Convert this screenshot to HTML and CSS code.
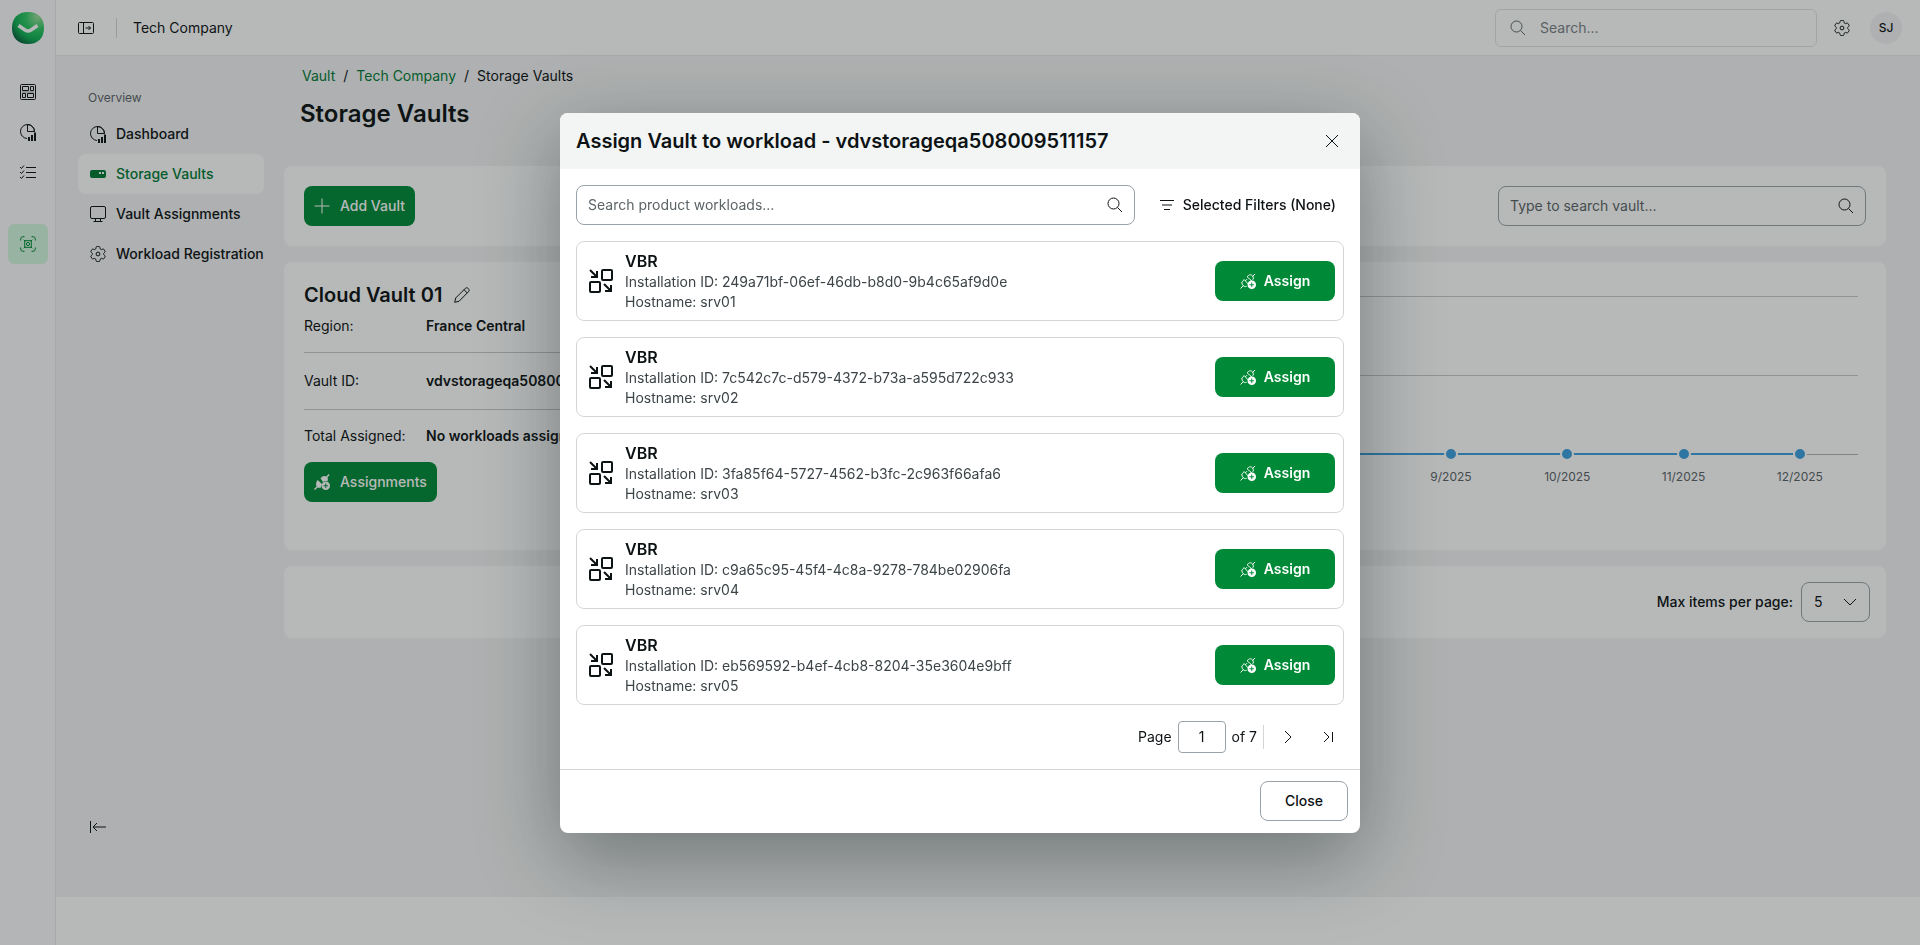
FILE: index.html
```html
<!DOCTYPE html>
<html lang="en">
<head>
  <meta charset="UTF-8">
  <meta name="viewport" content="width=device-width, initial-scale=1.0">
  <title>Storage Vaults</title>
  <link rel="stylesheet" href="styles.css">
</head>
<body>

  <!-- Shared icons -->
  <svg class="sprite" aria-hidden="true">
    <symbol id="i-search" viewBox="0 0 16 16"><circle cx="6.5" cy="6.5" r="5.500"/><path d="M10.500 10.500L15 15"/></symbol>
    <symbol id="i-gear" viewBox="0 0 16 16"><path d="M6 1Q6.200 0 7 0h2q.8 0 1 1l.4 1.700 1.100.7 1.700-.5q.9-.2 1.300.5l.9 1.600q.4.800-.3 1.400L13.900 7.500v1l1.200 1.100q.7.600.3 1.400l-.9 1.600q-.4.700-1.300.5l-1.700-.5-1.100.7L10 15q-.2 1-1 1H7q-.8 0-1-1l-.4-1.700-1.100-.7-1.700.5q-.9.200-1.300-.5L.6 11q-.4-.8.3-1.400L2.100 8.500v-1L.9 6.400Q.2 5.800.6 5l.9-1.600q.4-.7 1.300-.5l1.700.5 1.100-.7z" transform="translate(.4 .4) scale(.95)"/><circle cx="8" cy="8" r="1.900"/></symbol>
    <symbol id="i-pie" viewBox="0 0 16 17"><path d="M14.500 7.500A7 7 0 1 0 7 14.500M7.500 .5v7h7A7 7 0 0 0 7.500 .5z"/><path class="fill" d="M8 13h2v4H8zM11 11h2v6h-2zM14 8.500h2V17h-2z"/></symbol>
    <symbol id="i-plug" viewBox="0 0 17 17"><path d="M.5 16.500L3.500 13.500M13.200 3.800L16 1M3.500 13.500C1.500 11.500 1.600 9.500 3.300 8L4.500 7M4.500 7L8.500 11.500M7.500 4l5.500 5M7.500 4L9 2.700c1.300-1.200 3-1 4.200.3 1.300 1.300 1.300 3 .3 4.300M5.500 8.500L7.500 6.500M3.500 13.500c1 .9 2.200 1.200 3.500.7"/><circle class="fill" cx="12.500" cy="12.500" r="4.500"/><path class="cut" d="M12.500 10v5M10 12.500h5"/></symbol>
    <symbol id="i-plug-solid" viewBox="0 0 17 17"><path d="M.5 16.500L4 13M13 4L16 .5" stroke-width="1.500"/><path class="fill" d="M4 6.500L8.500 11 7 14.500H4.500C1.500 13 1.500 9.500 4 6.500zM7 4.500C8 2.500 11 1 13.500 3c1.500 1.500 1.500 3 .8 4.600L12 7.400l-2.500 1z"/><circle class="fill" cx="12.500" cy="12.500" r="4.500"/><path class="cut" d="M12.500 10v5M10 12.500h5"/></symbol>
    <symbol id="i-workload" viewBox="0 0 24 24"><rect x="13" y="1" width="10" height="10" rx="1"/><rect x="1" y="13" width="10" height="10" rx="1"/><path d="M1 1l7 7M8 2v6H2M15 15l7 7M22 16v6h-6"/></symbol>
  </svg>

  <div class="app">
    <aside class="rail">
      <svg class="logo" viewBox="0 0 32 32" role="img" aria-label="Home">
        <defs><radialGradient id="lg" cx="80%" cy="15%" r="95%"><stop offset="0" stop-color="#a0dca0"/><stop offset=".4" stop-color="#2fc864"/><stop offset=".75" stop-color="#0fae54"/><stop offset="1" stop-color="#0b6540"/></radialGradient></defs>
        <path d="M16 0C26 0 32 6 32 16S26 32 16 32 0 26 0 16 6 0 16 0z" fill="url(#lg)"/>
        <path d="M6.500 13.500l6.500 4.500q3 1.800 6 0l6.500-4.500" fill="none" stroke="#fff" stroke-width="3.500"/>
      </svg>
      <nav class="rail-nav">
        <a href="#" aria-label="Overview"><svg class="icon" viewBox="0 0 16 16"><rect x=".5" y=".5" width="15" height="15" rx="1"/><path d="M2.500 2.500h6v4h-6zM10.500 2.500h3v4h-3zM2.500 9.500h3v4h-3zM7.500 9.500h6v4h-6z"/><path d="M2 8h12" stroke-opacity=".4"/></svg></a>
        <a href="#" aria-label="Reports"><svg class="icon icon-tall"><use href="#i-pie"/></svg></a>
        <a href="#" aria-label="Tasks"><svg class="icon" viewBox="0 0 16 16"><path d="M6 3.500h10M6 8.500h10M6 13.500h10M0 3l1.500 1.500L4 1.500M0 8l1.500 1.500L4 6.500M0 13l1.500 1.500L4 11.500"/></svg></a>
      </nav>
      <a class="rail-active" href="#" aria-label="Vault"><svg class="icon" viewBox="0 0 16 16"><path d="M.7 4.500V3A2.300 2.300 0 0 1 3 .7h1.500M11.500 .7H13A2.300 2.300 0 0 1 15.300 3v1.500M15.300 11.500V13a2.300 2.300 0 0 1-2.300 2.300h-1.500M4.500 15.300H3A2.300 2.300 0 0 1 .7 13v-1.500"/><path d="M4.700 4.700h6.600v6.600H4.700zM3.700 3.700l1.500 1.500M12.300 3.700l-1.500 1.500M3.700 12.300l1.500-1.500M12.300 12.300l-1.500-1.500"/><circle cx="8" cy="8" r="1.600"/></svg></a>
    </aside>

    <div class="page">
      <header class="topbar">
        <button class="icon-btn" aria-label="Expand menu"><svg class="icon" viewBox="0 0 16 16"><rect x=".5" y="2.500" width="15" height="11" rx="1"/><path d="M5.500 2.500v11M7.500 8h5M10.500 6l2 2-2 2"/></svg></button>
        <span class="divider"></span>
        <span class="tenant">Tech Company</span>
        <label class="top-search">
          <svg class="icon"><use href="#i-search"/></svg>
          <input type="text" placeholder="Search..." aria-label="Search">
        </label>
        <button class="icon-btn" aria-label="Settings"><svg class="icon"><use href="#i-gear"/></svg></button>
        <button class="avatar">SJ</button>
      </header>

      <div class="workspace">
        <nav class="subnav">
          <h2>Overview</h2>
          <a href="#"><svg class="icon icon-tall"><use href="#i-pie"/></svg>Dashboard</a>
          <a href="#" class="active"><svg class="icon" viewBox="0 0 16 16"><rect class="fill" x="0" y="4" width="16" height="8" rx="2"/><path class="dots" d="M9 6h2v2H9zM12 6h2v2h-2z"/></svg>Storage Vaults</a>
          <a href="#"><svg class="icon" viewBox="0 0 16 16"><rect x=".5" y=".5" width="15" height="12" rx="1.500"/><path d="M5.500 12.500v3M10.500 12.500v3M3.500 15.500h9"/></svg>Vault Assignments</a>
          <a href="#"><svg class="icon"><use href="#i-gear"/></svg>Workload Registration</a>
          <button class="icon-btn collapse" aria-label="Collapse menu"><svg class="icon" viewBox="0 0 16 16"><path d="M.5 2v12M3 8h13M7 4L3 8l4 4"/></svg></button>
        </nav>

        <main>
          <nav class="crumbs">
            <a href="#">Vault</a><span>/</span><a href="#">Tech Company</a><span>/</span>Storage Vaults
          </nav>
          <h1>Storage Vaults</h1>

          <section class="card toolbar">
            <button class="btn primary"><svg class="icon" viewBox="0 0 16 16"><path d="M8 .5v15M.5 8h15"/></svg>Add Vault</button>
            <label class="field vault-search">
              <input type="text" placeholder="Type to search vault..." aria-label="Search vault">
              <svg class="icon"><use href="#i-search"/></svg>
            </label>
          </section>

          <section class="card vault">
            <div class="vault-info">
              <h3>Cloud Vault 01 <button class="icon-btn" aria-label="Rename"><svg class="icon" viewBox="0 0 16 16"><path d="M.7 15.300l1-4.300L11.500 1.200c1.600-1.600 4.800 1.500 3.200 3.300L5 14.300zM10 2.700L13.300 6" stroke-linejoin="round"/></svg></button></h3>
              <dl>
                <div><dt>Region:</dt><dd>France Central</dd></div>
                <div><dt>Vault ID:</dt><dd>vdvstorageqa508009511157</dd></div>
                <div><dt>Total Assigned:</dt><dd>No workloads assigned</dd></div>
              </dl>
              <button class="btn primary"><svg class="icon"><use href="#i-plug-solid"/></svg>Assignments</button>
            </div>
            <div class="chart">
              <div class="plot"><span class="series"></span></div>
              <ul class="months" id="months"></ul>
            </div>
          </section>

          <section class="card paging">
            <label for="perPage">Max items per page:</label>
            <div class="select">
              <select id="perPage"><option>5</option><option>10</option><option>25</option></select>
              <svg class="icon" viewBox="0 0 16 16"><path d="M2 5l6 6 6-6"/></svg>
            </div>
          </section>
        </main>
      </div>
    </div>
  </div>

  <div class="overlay">
    <div class="modal" role="dialog" aria-modal="true" aria-labelledby="modalTitle">
      <div class="modal-head">
        <h2 id="modalTitle">Assign Vault to workload - vdvstorageqa508009511157</h2>
        <button class="icon-btn" aria-label="Close dialog"><svg class="icon" viewBox="0 0 16 16"><path d="M2 2l12 12M14 2L2 14"/></svg></button>
      </div>
      <div class="modal-body">
        <div class="filters">
          <label class="field">
            <input type="text" placeholder="Search product workloads..." aria-label="Search product workloads">
            <svg class="icon"><use href="#i-search"/></svg>
          </label>
          <button class="filter-btn"><svg class="icon" viewBox="0 0 16 16"><path d="M1 3.500h14M3 8h10M5 12.500h6"/></svg>Selected Filters (None)</button>
        </div>
        <ul class="workloads" id="workloads"></ul>
        <div class="pager">
          <label for="pageNo">Page</label>
          <input type="text" id="pageNo" value="1">
          <span>of 7</span>
          <span class="divider"></span>
          <button class="icon-btn" aria-label="Next page"><svg class="icon" viewBox="0 0 16 16"><path d="M5 2l6 6-6 6"/></svg></button>
          <button class="icon-btn" aria-label="Last page"><svg class="icon" viewBox="0 0 16 16"><path d="M4 3l5 5-5 5M12.500 3v10"/></svg></button>
        </div>
      </div>
      <div class="modal-foot">
        <button class="btn">Close</button>
      </div>
    </div>
  </div>

  <script>
    const workloads = [
      { id: '249a71bf-06ef-46db-b8d0-9b4c65af9d0e', host: 'srv01' },
      { id: '7c542c7c-d579-4372-b73a-a595d722c933', host: 'srv02' },
      { id: '3fa85f64-5727-4562-b3fc-2c963f66afa6', host: 'srv03' },
      { id: 'c9a65c95-45f4-4c8a-9278-784be02906fa', host: 'srv04' },
      { id: 'eb569592-b4ef-4cb8-8204-35e3604e9bff', host: 'srv05' }
    ];
    const months = ['6/2025', '7/2025', '8/2025', '9/2025', '10/2025', '11/2025', '12/2025'];

    document.getElementById('workloads').innerHTML = workloads.map(w => `
      <li>
        <svg class="product"><use href="#i-workload"/></svg>
        <div class="details">
          <h3>VBR</h3>
          <p>Installation ID: ${w.id}</p>
          <p>Hostname: ${w.host}</p>
        </div>
        <button class="btn primary assign"><svg class="icon"><use href="#i-plug"/></svg>Assign</button>
      </li>`).join('');

    document.getElementById('months').innerHTML = months.map(m => `<li><i></i>${m}</li>`).join('');
  </script>

</body>
</html>
```
FILE: styles.css
```css
* {
  box-sizing: border-box;
}

body {
  margin: 0;
  font-family: Inter, "Liberation Sans", sans-serif;
  font-size: 14px;
  line-height: 20px;
  color: #0d1214;
}

h1, h2, h3, p, ul, dl, dd {
  margin: 0;
  padding: 0;
}

ul {
  list-style: none;
}

a {
  color: inherit;
  text-decoration: none;
}

button, input, select {
  font: inherit;
  color: inherit;
}

/* Icons */
.sprite {
  display: none;
}

.icon {
  width: 16px;
  height: 16px;
  flex: none;
  fill: none;
  stroke: currentColor;
}

.icon-tall {
  height: 17px;
}

.fill {
  fill: currentColor;
  stroke: none;
}

.cut {
  stroke: #008a38;
}

.dots {
  fill: #fff;
  stroke: none;
}

.icon-btn {
  display: flex;
  padding: 0;
  border: 0;
  background: none;
  cursor: pointer;
}

.divider {
  width: 1px;
  height: 20px;
  background: #d3d6d8;
}

/* App shell */
.app {
  display: flex;
  min-height: 100vh;
}

.rail {
  width: 56px;
  flex: none;
  display: flex;
  flex-direction: column;
  align-items: center;
  padding-top: 12px;
  background: #fafafb;
  border-right: 1px solid #e6e8e9;
}

.logo {
  width: 32px;
  height: 32px;
}

.rail-nav {
  display: flex;
  flex-direction: column;
  margin: 28px 0 32px;
}

.rail-nav a,
.rail-active {
  width: 40px;
  height: 40px;
  display: flex;
  align-items: center;
  justify-content: center;
}

.rail-active {
  border-radius: 6px;
  background: #d5f7e0;
  color: #008a38;
}

.page {
  flex: 1;
  min-width: 0;
  display: flex;
  flex-direction: column;
  padding-bottom: 48px;
}

.topbar {
  height: 56px;
  display: flex;
  align-items: center;
  padding: 0 18px 0 22px;
  border-bottom: 1px solid #e6e8e9;
}

.topbar .divider {
  margin: 0 16px 0 22px;
}

.top-search {
  width: 322px;
  height: 38px;
  display: flex;
  align-items: center;
  gap: 14px;
  margin: 0 17px 0 auto;
  padding: 0 14px;
  border: 1px solid #e0e3e4;
  border-radius: 6px;
  color: #5c6468;
}

.avatar {
  width: 32px;
  height: 32px;
  margin-left: 20px;
  padding: 0;
  border: 0;
  border-radius: 50%;
  background: #f3f3f4;
  font-size: 12px;
  font-weight: 500;
}

input {
  flex: 1;
  min-width: 0;
  padding: 0;
  border: 0;
  outline: 0;
  background: none;
}

input::placeholder {
  color: #5c6468;
  opacity: 1;
}

.top-search input::placeholder {
  color: #7a8286;
}

.workspace {
  flex: 1;
  display: flex;
  background: #f3f3f4;
}

/* Section menu */
.subnav {
  width: 208px;
  flex: none;
  display: flex;
  flex-direction: column;
  padding: 32px 0 62px 22px;
  font-weight: 500;
}

.subnav h2 {
  margin-bottom: 6px;
  padding-left: 10px;
  font-size: 12px;
  font-weight: 400;
  color: #5c6468;
}

.subnav a {
  height: 40px;
  display: flex;
  align-items: center;
  gap: 10px;
  padding-left: 12px;
  border-radius: 8px;
  white-space: nowrap;
}

.subnav .active {
  background: #fff;
  color: #007a33;
}

.collapse {
  margin: auto 0 0 12px;
}

/* Main content */
main {
  flex: 1;
  min-width: 0;
  padding: 10px 34px 0 20px;
}

.crumbs {
  display: flex;
  padding-left: 18px;
}

.crumbs a {
  color: #007a33;
}

.crumbs span {
  margin: 0 8px;
}

h1 {
  margin: 12px 0 36px 16px;
  font-size: 24px;
  line-height: 32px;
  font-weight: 600;
}

.card {
  border-radius: 8px;
  background: #fff;
}

.card + .card {
  margin-top: 16px;
}

.toolbar {
  display: flex;
  justify-content: space-between;
  padding: 20px;
}

.btn {
  height: 40px;
  display: inline-flex;
  align-items: center;
  gap: 10px;
  padding: 0 10px;
  border: 1px solid #9aa2a7;
  border-radius: 8px;
  background: #fff;
  font-weight: 500;
  cursor: pointer;
}

.primary {
  border: 0;
  background: #008a38;
  color: #fff;
}

.field {
  height: 40px;
  flex: 1;
  display: flex;
  align-items: center;
  padding: 0 11px;
  border: 1px solid #9aa2a7;
  border-radius: 8px;
}

.vault-search {
  max-width: 368px;
}

.vault {
  min-height: 288px;
  display: flex;
  gap: 40px;
  padding: 20px 28px 20px 20px;
}

.vault-info {
  flex: 1;
}

.vault h3 {
  display: flex;
  align-items: center;
  gap: 12px;
  font-size: 20px;
  line-height: 26px;
  font-weight: 600;
}

.vault dl div {
  display: flex;
  padding: 18px 0;
  border-bottom: 1px solid #c5c9cb;
}

.vault dl div:first-child {
  padding: 8px 0 16px;
}

.vault dl div:last-child {
  padding: 16px 0;
  border: 0;
}

.vault dt {
  width: 122px;
}

.vault dd {
  font-weight: 600;
}

.chart {
  flex: 0 0 814px;
}

/* Grid lines are 79px apart, the series sits on the zero line */
.plot {
  height: 173px;
  padding-top: 172px;
  background: linear-gradient(#c5c9cb, #c5c9cb) 0 14px / 100% 1px no-repeat,
    linear-gradient(#c5c9cb, #c5c9cb) 0 93px / 100% 1px no-repeat,
    linear-gradient(#aeb3b5, #aeb3b5) 0 172px / 100% 1px no-repeat;
}

.series {
  display: block;
  height: 2px;
  margin: -1px 58px 0;
  background: #3d9fe0;
}

.months {
  display: flex;
  margin-top: -8px;
}

.months li {
  flex: 1;
  display: flex;
  flex-direction: column;
  align-items: center;
  gap: 6px;
  font-size: 12px;
  color: #5c6468;
}

.months i {
  width: 14px;
  height: 14px;
  border: 2px solid #fff;
  border-radius: 50%;
  background: #3d9fe0;
}

.paging {
  display: flex;
  align-items: center;
  justify-content: flex-end;
  gap: 8px;
  padding: 16px;
  font-weight: 500;
}

.select {
  display: grid;
  align-items: center;
}

.select select {
  grid-area: 1 / 1;
  width: 69px;
  height: 40px;
  padding: 0 12px;
  appearance: none;
  border: 1px solid #9aa2a7;
  border-radius: 8px;
  background: none;
  font-weight: 400;
}

.select .icon {
  grid-area: 1 / 1;
  justify-self: end;
  margin-right: 12px;
  pointer-events: none;
}

/* Dialog */
.overlay {
  position: fixed;
  inset: 0;
  display: flex;
  align-items: center;
  justify-content: center;
  background: rgba(18, 22, 24, 0.3);
}

.modal {
  width: 800px;
  max-width: 100%;
  border-radius: 8px;
  background: #fff;
  overflow: hidden;
  box-shadow: 0 24px 80px rgba(18, 30, 30, 0.4);
}

.modal-head {
  display: flex;
  align-items: center;
  justify-content: space-between;
  padding: 14px 20px 14px 16px;
  background: #f3f5f4;
}

.modal-head h2 {
  font-size: 20px;
  line-height: 28px;
  font-weight: 600;
}

.modal-body {
  padding: 16px;
}

.filters {
  display: flex;
}

.filter-btn {
  display: flex;
  align-items: center;
  gap: 8px;
  margin-left: 16px;
  padding: 0 8px;
  border: 0;
  background: none;
  font-weight: 500;
}

.workloads {
  display: grid;
  gap: 16px;
  margin: 16px 0;
}

.workloads li {
  display: flex;
  align-items: center;
  gap: 12px;
  height: 80px;
  padding: 0 8px 0 12px;
  border: 1px solid #d3d6d8;
  border-radius: 8px;
}

.product {
  width: 24px;
  height: 24px;
  fill: none;
  stroke: currentColor;
  stroke-width: 2;
}

.details {
  flex: 1;
  color: #3c4448;
}

.details h3 {
  font-size: 16px;
  line-height: 22px;
  font-weight: 600;
  color: #0d1214;
}

.assign {
  width: 120px;
  justify-content: center;
  gap: 8px;
  font-weight: 600;
}

.pager {
  display: flex;
  align-items: center;
  gap: 6px;
  padding-right: 8px;
}

.pager input {
  width: 48px;
  height: 32px;
  flex: none;
  border: 1px solid #9aa2a7;
  border-radius: 4px;
  text-align: center;
}

.pager label {
  margin-left: auto;
}

.pager .divider {
  height: 24px;
}

.pager .icon-btn {
  margin-left: 10px;
}

.pager .icon-btn + .icon-btn {
  margin-left: 18px;
}

.modal-foot {
  display: flex;
  justify-content: flex-end;
  padding: 11px 12px 12px;
  border-top: 1px solid #d3d6d8;
}

.modal-foot .btn {
  width: 88px;
  justify-content: center;
}
```
